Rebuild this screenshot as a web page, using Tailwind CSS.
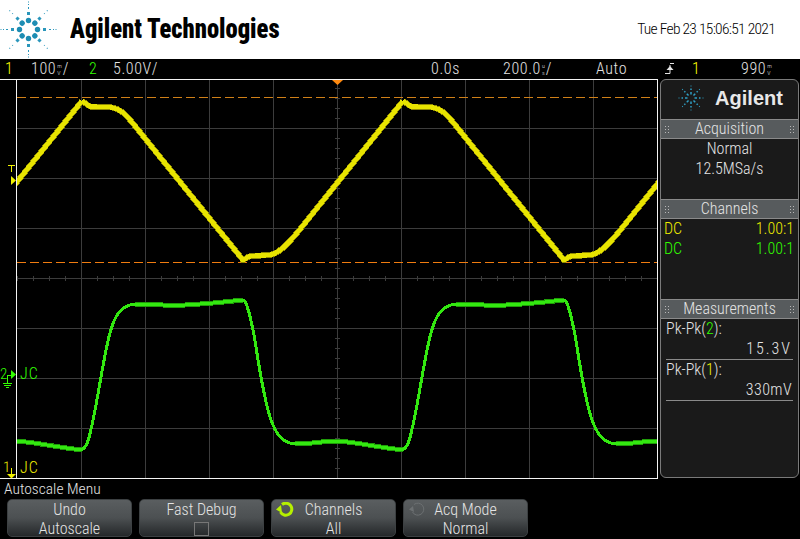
<!DOCTYPE html>
<html lang="en">
<head>
    <meta charset="UTF-8">
    <title>Agilent Technologies</title>
    <script src="https://cdn.jsdelivr.net/npm/@tailwindcss/browser@4"></script>
</head>
<body class="bg-black font-['Roboto',sans-serif] font-light font-stretch-[75%] text-[#e4e4e4] overflow-hidden">
<div class="w-[800px] h-[539px] flex flex-col">

    <!-- white banner -->
    <header class="h-[59px] bg-white flex items-center text-black">
        <svg class="w-[57px] h-[57px] shrink-0" viewBox="-28.5 -28.5 57 57" fill="#2a96bb">
            <defs>
                <g id="spoke">
                    <circle cx="0" cy="-9" r="2.700" fill="#1d8db3"/>
                    <rect x="-1.500" y="-17.500" width="3" height="3"/>
                    <rect x="-.5" y="-22.500" width="1" height="2"/>
                    <rect x="-.5" y="-25.500" width="1" height="1"/>
                    <rect x="-.5" y="-28" width="1" height="1"/>
                </g>
                <g id="diag">
                    <circle cx="0" cy="-9" r="2.700" fill="#1d8db3"/>
                    <rect x="-1.500" y="-17" width="3" height="3"/>
                    <rect x="-.5" y="-23" width="1" height="1"/>
                    <rect x="-.5" y="-27" width="1" height="1"/>
                </g>
                <g id="grip">
                    <rect x="0" y="0" width="1" height="1"/><rect x="3" y="0" width="1" height="1"/>
                    <rect x="0" y="3" width="1" height="1"/><rect x="3" y="3" width="1" height="1"/>
                    <rect x="0" y="6" width="1" height="1"/><rect x="3" y="6" width="1" height="1"/>
                </g>
            </defs>
            <use href="#spoke"/>
            <use href="#diag" transform="rotate(45)"/>
            <use href="#spoke" transform="rotate(90)"/>
            <use href="#diag" transform="rotate(135)"/>
            <use href="#spoke" transform="rotate(180)"/>
            <use href="#diag" transform="rotate(225)"/>
            <use href="#spoke" transform="rotate(270)"/>
            <use href="#diag" transform="rotate(315)"/>
        </svg>
        <div class="ml-[13px] font-black text-[27px] origin-left scale-x-[.91] whitespace-nowrap">Agilent Technologies</div>
        <div class="ml-auto mr-[25px] text-[15.5px] tracking-[-.7px]">Tue Feb 23 15:06:51 2021</div>
    </header>

    <!-- status line -->
    <div class="h-[20px] flex items-center text-[16px] leading-[20px] tracking-[.6px]">
        <span class="w-[31px] pl-[5px] text-[#ffff00]">1</span>
        <span class="w-[58px] flex items-center">100<span class="flex flex-col ml-[1px] text-[6px] leading-[7px] tracking-normal"><span>m</span><span>V</span></span><span class="ml-[1px]">/</span></span>
        <span class="w-[24px] text-[#33ff00]">2</span>
        <span class="w-[318px]">5.00V/</span>
        <span class="w-[72px]">0.0s</span>
        <span class="w-[93px] flex items-center">200.0<span class="flex flex-col ml-[1px] text-[6px] leading-[7px] tracking-normal"><span>u</span><span>s</span></span><span class="ml-[1px]">/</span></span>
        <span class="w-[69px]">Auto</span>
        <span class="w-[27px]">
            <svg class="w-[9px] h-[12px]" viewBox="0 0 9 12" fill="#e4e4e4" stroke="#e4e4e4">
                <path d="M0 10.500h5V2M5 .5h4"  fill="none"/>
                <path d="M5 3L1.500 7h7z" stroke="none"/>
            </svg>
        </span>
        <span class="w-[49px] text-[#ffff00]">1</span>
        <span class="flex items-center">990<span class="flex flex-col ml-[1px] text-[6px] leading-[7px] tracking-normal"><span>m</span><span>V</span></span></span>
    </div>

    <!-- graticule + side panel -->
    <div class="h-[400px] flex">
        <div class="relative w-[658px] h-[400px]">
            <svg class="w-[658px] h-[400px]" viewBox="0 79 658 400" shape-rendering="crispEdges">
                <defs>
                    <clipPath id="plot"><rect x="17" y="79" width="640" height="399"/></clipPath>
                    <path id="yellow" d="M82 101L90 106.500C96 107 104 106.500 112 107.500C120 109 125 114 131 121L243 260L249 256.500C256 255 266 256 272 254.500C280 252 287 245 297 233L403 101"/>
                    <path id="green" d="M82 449.500C88 448 91 430 95 410C100 385 105 350 110 333C115 315 120 306 135 304C150 304 165 306 185 305C205 304 225 302 243 300C247 301 250 315 254 335C259 365 263 395 270 417C275 432 281 443 295 444C310 444 325 441 335 441C350 441 375 447 403 450"/>
                    <path id="flats" d="M135 304C150 304 165 306 185 305C205 304 225 302 243 300M295 444C310 444 325 441 335 441C350 441 375 447 403 450"/>
                </defs>
                <g stroke="#3c3c3c">
                    <path d="M81.500 79V478M145.500 79V478M209.500 79V478M273.500 79V478M337.500 79V478M401.500 79V478M465.500 79V478M529.500 79V478M593.500 79V478"/>
                    <path d="M17 128.500H657M17 178.500H657M17 228.500H657M17 278.500H657M17 328.500H657M17 378.500H657M17 428.500H657"/>
                    <path d="M17 278.500H657" stroke-width="5" stroke-dasharray="1 15"/>
                    <path d="M337.500 88V478" stroke-width="5" stroke-dasharray="1 9"/>
                </g>
                <path d="M17 97.500H657" stroke="#d08018" stroke-dasharray="9 4"/>
                <path d="M17 262.500H657" stroke="#f07c10" stroke-dasharray="9 4"/>
                <g clip-path="url(#plot)" fill="none" stroke-linejoin="round">
                    <g stroke="#8f8a00" stroke-width="6">
                        <use href="#yellow" x="-321"/><use href="#yellow"/><use href="#yellow" x="321"/>
                    </g>
                    <g stroke="#e8e400" stroke-width="4.500">
                        <use href="#yellow" x="-321"/><use href="#yellow"/><use href="#yellow" x="321"/>
                    </g>
                    <g stroke="#1f9c08" stroke-width="5">
                        <use href="#flats" x="-321"/><use href="#flats"/><use href="#flats" x="321"/>
                    </g>
                    <g stroke="#33e810" stroke-width="3">
                        <use href="#green" x="-321"/><use href="#green"/><use href="#green" x="321"/>
                    </g>
                </g>
                <path d="M0 79.500H658M0 478.500H658M16.500 79V478M657.500 79V478" stroke="#f4f4f4" fill="none"/>
                <path d="M332 80h11l-5.500 5z" fill="#ff8a10" shape-rendering="auto"/>
                <g stroke="#f0f000" fill="none">
                    <path d="M8 165.500h7M11.500 165v7"/>
                    <path d="M11.500 468v7"/>
                    <path d="M11 176v9l5-4.500z" fill="#f0f000" stroke="none" shape-rendering="auto"/>
                    <path d="M7 474h9l-4.500 4.500z" fill="#f0f000" stroke="none" shape-rendering="auto"/>
                </g>
                <g stroke="#33ff00" fill="none">
                    <path d="M7.500 384V375.500H11"/>
                    <path d="M3 383.500h9M4 385.500h7M6 387.500h3"/>
                    <path d="M11 370v9l5-4.500z" fill="#33ff00" stroke="none" shape-rendering="auto"/>
                </g>
            </svg>
            <span class="absolute left-0 top-[287px] text-[15px] leading-[16px] text-[#33ff00]">2</span>
            <span class="absolute left-[20px] top-[287px] text-[16px] leading-[16px] tracking-[1px] text-[#33ff00]">JC</span>
            <span class="absolute left-[3px] top-[380px] text-[15px] leading-[16px] text-[#f0f000]">1</span>
            <span class="absolute left-[20px] top-[381px] text-[16px] leading-[16px] tracking-[1px] text-[#f0f000]">JC</span>
        </div>

        <!-- side panel -->
        <aside class="ml-[2px] w-[139px] h-[399px] rounded-[6px] border border-[#7a7a7a] bg-[#1a1a1a] flex flex-col text-[16px] leading-[20px]">
            <div class="h-[39px] pb-[3px] flex items-center justify-center gap-[9px]">
                <svg class="w-[30px] h-[30px]" viewBox="-15 -15 30 30" fill="#2f9fc4">
                    <defs>
                        <g id="mini">
                            <rect x="-.75" y="-6" width="1.500" height="2.500"/>
                            <rect x="-.75" y="-9.500" width="1.500" height="1.500"/>
                            <rect x="-.5" y="-12.500" width="1" height="1"/>
                        </g>
                    </defs>
                    <use href="#mini"/>
                    <use href="#mini" transform="rotate(45)"/>
                    <use href="#mini" transform="rotate(90)"/>
                    <use href="#mini" transform="rotate(135)"/>
                    <use href="#mini" transform="rotate(180)"/>
                    <use href="#mini" transform="rotate(225)"/>
                    <use href="#mini" transform="rotate(270)"/>
                    <use href="#mini" transform="rotate(315)"/>
                </svg>
                <span class="font-['Liberation_Sans',sans-serif] font-bold text-[20px] text-[#e8e8e8]">Agilent</span>
            </div>

            <div class="h-[20px] bg-[#575b5d] border-y border-[#8a8a8a] flex items-center justify-between px-[4px]">
                <svg class="w-[4px] h-[7px]" viewBox="0 0 4 7" fill="#b8b8b8"><use href="#grip"/></svg>
                <span>Acquisition</span>
                <svg class="w-[4px] h-[7px]" viewBox="0 0 4 7" fill="#b8b8b8"><use href="#grip"/></svg>
            </div>
            <div class="h-[60px] flex flex-col items-center">
                <span>Normal</span>
                <span>12.5MSa/s</span>
            </div>

            <div class="h-[20px] bg-[#575b5d] border-y border-[#8a8a8a] flex items-center justify-between px-[4px]">
                <svg class="w-[4px] h-[7px]" viewBox="0 0 4 7" fill="#b8b8b8"><use href="#grip"/></svg>
                <span>Channels</span>
                <svg class="w-[4px] h-[7px]" viewBox="0 0 4 7" fill="#b8b8b8"><use href="#grip"/></svg>
            </div>
            <div class="h-[80px] pl-[3px] pr-[4px] text-[#f0f000]">
                <div class="flex justify-between"><span>DC</span><span>1.00:1</span></div>
                <div class="flex justify-between text-[#33ff00]"><span>DC</span><span>1.00:1</span></div>
            </div>

            <div class="h-[20px] bg-[#575b5d] border-y border-[#8a8a8a] flex items-center justify-between px-[4px]">
                <svg class="w-[4px] h-[7px]" viewBox="0 0 4 7" fill="#b8b8b8"><use href="#grip"/></svg>
                <span>Measurements</span>
                <svg class="w-[4px] h-[7px]" viewBox="0 0 4 7" fill="#b8b8b8"><use href="#grip"/></svg>
            </div>
            <div class="px-[5px]">
                <div>Pk-Pk(<span class="text-[#33ff00]">2</span>):</div>
                <div class="text-right border-b border-[#8a8a8a] pr-[1px] tracking-[2px]">15.3V</div>
                <div>Pk-Pk(<span class="text-[#f0f000]">1</span>):</div>
                <div class="text-right border-b border-[#8a8a8a] pr-[1px] tracking-[.4px]">330mV</div>
            </div>
        </aside>
    </div>

    <!-- softkey menu -->
    <div class="h-[20px] pl-[4px] text-[15.500px] leading-[20px]">Autoscale Menu</div>
    <div class="flex gap-[7px] pl-[7px] text-[16px] leading-[19px] text-center">
        <div class="w-[125px] h-[38px] rounded-[5px] border border-[#3c4042] bg-gradient-to-b from-[#5a5e60] via-[#4c5052] to-[#25282a]">
            <div>Undo</div><div>Autoscale</div>
        </div>
        <div class="w-[125px] h-[38px] rounded-[5px] border border-[#3c4042] bg-gradient-to-b from-[#5a5e60] via-[#4c5052] to-[#25282a] flex flex-col items-center">
            <div>Fast Debug</div>
            <div class="mt-[3px] w-[15px] h-[15px] border border-[#777]"></div>
        </div>
        <div class="relative w-[125px] h-[38px] rounded-[5px] border border-[#3c4042] bg-gradient-to-b from-[#5a5e60] via-[#4c5052] to-[#25282a]">
            <svg class="absolute left-[4px] top-[2px] w-[18px] h-[16px]" viewBox="0 0 18 16" fill="none" stroke="#b6f000" stroke-width="3">
                <path d="M6 2.500A6 6 0 1 1 4.500 10"/>
                <path d="M0 7.500L5 3l1 8z" fill="#b6f000" stroke="none"/>
            </svg>
            <div>Channels</div><div>All</div>
        </div>
        <div class="relative w-[125px] h-[38px] rounded-[5px] border border-[#3c4042] bg-gradient-to-b from-[#5a5e60] via-[#4c5052] to-[#25282a]">
            <svg class="absolute left-[4px] top-[2px] w-[18px] h-[16px]" viewBox="0 0 18 16" fill="none" stroke="#6c7072">
                <path d="M6 2.500A6 6 0 1 1 4.500 10"/>
                <path d="M1 7.500L5 4l1 6z" fill="#6c7072" stroke="none"/>
            </svg>
            <div>Acq Mode</div><div>Normal</div>
        </div>
    </div>
</div>
</body>
</html>
